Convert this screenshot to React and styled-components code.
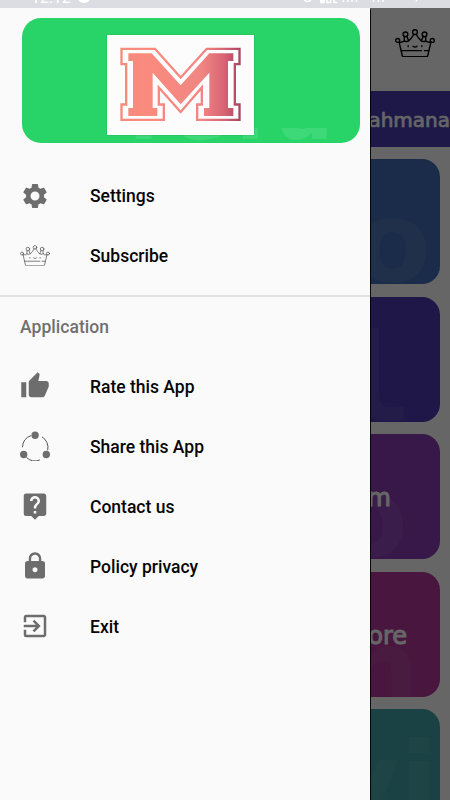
import React from "react";
import styled, { createGlobalStyle } from "styled-components";
import { MdSettings, MdThumbUp, MdLiveHelp, MdLock, MdExitToApp } from "react-icons/md";

const GlobalStyle = createGlobalStyle`
  * { box-sizing: border-box; }
  body { margin: 0; background: #fff; font-family: Roboto, "Liberation Sans", sans-serif; }
`;

const Screen = styled.div`
  position: relative;
  width: 450px;
  height: 800px;
  overflow: hidden;
  display: flex;
  flex-direction: column;
`;

const StatusBar = styled.header`
  height: 8px;
  flex: none;
  display: flex;
  justify-content: space-between;
  align-items: flex-end;
  overflow: hidden;
  background: #dcdde2;
`;

const Page = styled.main`
  flex: 1;
  min-height: 0;
  overflow: hidden;
  background: #fff;
`;

const AppBar = styled.div`
  height: 82.5px;
  padding: 20.5px 15px 0 0;
  display: flex;
  justify-content: flex-end;
  align-items: flex-start;
`;

const Banner = styled.div`
  height: 56px;
  overflow: hidden;
  display: flex;
  align-items: center;
  justify-content: flex-end;
  padding-top: 2px;
  background: #493cb4;
`;

const TechText = styled.span`
  color: #fff;
  font: 400 ${(p) => p.$size}px "DejaVu Sans", sans-serif;
  letter-spacing: ${(p) => p.$spacing || 0}px;
  -webkit-text-stroke: ${(p) => p.$stroke || 0}px #fff;
  white-space: nowrap;
`;

const CardList = styled.div`
  display: flex;
  flex-direction: column;
  gap: 12.5px;
  padding: 12.5px 10px 0 22px;
`;

const Card = styled.section`
  position: relative;
  height: 125px;
  flex: none;
  overflow: hidden;
  border-radius: 18px;
  background: ${(p) => p.$color};
  display: flex;
  align-items: center;
  justify-content: flex-end;
  padding: 3px ${(p) => p.$inset || 0}px 0 0;
`;

const Ghost = styled.span`
  position: absolute;
  right: ${(p) => p.$right}px;
  top: ${(p) => p.$top}px;
  font: 700 ${(p) => p.$size}px/1 ${(p) => (p.$mono ? '"DejaVu Sans Mono", monospace' : '"DejaVu Sans", sans-serif')};
  color: rgba(255, 255, 255, 0.07);
  white-space: nowrap;
`;

const Scrim = styled.div`
  position: absolute;
  inset: 8px 0 0 0;
  background: rgba(0, 0, 0, 0.6);
`;

const Drawer = styled.aside`
  position: absolute;
  left: 0;
  top: 8px;
  bottom: 0;
  width: 370px;
  background: #fafafa;
  box-shadow: 0 0 1px 0.5px rgba(0, 0, 0, 0.9);
  clip-path: inset(0 -8px 0 0);
`;

const Hero = styled.div`
  position: relative;
  margin: 10px 10px 0 22px;
  height: 125px;
  padding: 16.5px 0 0 84.5px;
  border-radius: 19px;
  overflow: hidden;
  background: #28d468;
`;

const LogoTile = styled.div`
  position: relative;
  width: 147.5px;
  height: 100.5px;
  background: #fcfcfc;
  box-shadow: 0 0 1px rgba(0, 70, 20, 0.5);
`;

const HeroGhost = styled.span`
  position: absolute;
  left: 93px;
  top: 50px;
  font: 700 84px/1 "DejaVu Sans", sans-serif;
  letter-spacing: 9px;
  color: rgba(255, 255, 255, 0.1);
  clip-path: inset(60px 0 0 0);
`;

const Menu = styled.nav`
  padding-top: ${(p) => p.$top || 0}px;
`;

const Row = styled.a`
  height: 60px;
  display: flex;
  align-items: center;
  gap: 40px;
  padding-left: 20px;
  font-size: 17.5px;
  font-weight: 500;
  color: #050505;
`;

const Label = styled.span`
  padding-top: 1px;
`;

const IconSlot = styled.span`
  width: 30px;
  height: 30px;
  flex: none;
  display: flex;
  align-items: center;
  justify-content: center;
  color: #6d6d6d;
`;

const SectionTitle = styled.h2`
  margin: 0;
  height: 61px;
  padding: 0 0 0 20px;
  border-top: 2px solid #e1e1e1;
  line-height: 61px;
  font-size: 17.5px;
  font-weight: 500;
  letter-spacing: 0.05px;
  color: #707070;
`;

function Crown({ width, stroke, color = "#000" }) {
  return (
    <svg width={width} height={width * 0.72} viewBox="0 0 40 29" fill="none" stroke={color} strokeWidth={stroke} strokeLinejoin="round" strokeLinecap="round">
      <circle cx="2.6" cy="11.5" r="2" />
      <circle cx="10.4" cy="5.4" r="2.4" />
      <circle cx="20" cy="3.2" r="2.4" />
      <circle cx="29.6" cy="5.4" r="2.4" />
      <circle cx="37.4" cy="11.5" r="2" />
      <path d="M4 13.2 7.2 27q.3 1 1.4 1h22.8q1.1 0 1.4-1L36 13.2M4 13.2q3.5.6 5.2-1.3V7.6M11.8 7.2l1.8 4.8Q17 9 18.8 5.3M21.2 5.3Q23 9 26.4 12l1.8-4.8M30.8 7.6v4.3q1.7 1.9 5.2 1.3M9.2 11.9q2.2 1.4 4.4.1M26.4 12q2.2 1.3 4.4-.1M6 21.8h20.5M29.5 21.8H34M13.1 16.8v.8M26.9 16.8v.8M18 17.4q2 1.5 4 0" />
    </svg>
  );
}

function ShareRing() {
  return (
    <svg width="30" height="30" viewBox="0 0 30 30">
      <path d="M2.5 16.3A12.7 12.7 0 0 1 11 4.6M22 5.8A12.7 12.7 0 0 1 27.7 19.3M6.5 26.500A12.7 12.7 0 0 0 19.8 29" fill="none" stroke="#555" strokeWidth="1" />
      <g fill="#6d6d6d">
        <circle cx="15.1" cy="4.3" r="3.7" />
        <circle cx="3.7" cy="23.5" r="3.7" />
        <circle cx="26.3" cy="23.5" r="3.7" />
      </g>
    </svg>
  );
}

const emblemOuter = "M63.5 55.5H164L241 141.5 319 55.5H417.5V101.5H403.5V222.5H417.5V268.5H290.5V222.5H304.5V171.5L241 245 175.5 171.5V222.5H190.5V268.5H63.5V222.5H77.5V101.5H63.5Z";
const emblemInner = "M84 69H154L241 165 327 69H399V92H383V233H399V257H311V233H327V127L241 222 157 127V233H171V257H84V233H98V92H84Z";

function Emblem() {
  return (
    <svg width="147.5" height="101" viewBox="20 14 442.5 303">
      <defs>
        <linearGradient id="coral" gradientUnits="userSpaceOnUse" x1="61" y1="0" x2="420" y2="0">
          <stop offset="0" stopColor="#f58b7d" />
          <stop offset="0.25" stopColor="#fb8a7e" />
          <stop offset="0.68" stopColor="#f08683" />
          <stop offset="0.86" stopColor="#d96474" />
          <stop offset="1" stopColor="#a84561" />
        </linearGradient>
      </defs>
      <path d={emblemOuter} fill="none" stroke="url(#coral)" strokeWidth="7" />
      <path d={emblemInner} fill="url(#coral)" />
    </svg>
  );
}

const StatusText = styled.span`
  font-size: 16px;
  line-height: 16px;
  margin-bottom: 2px;
  color: #fff;
`;

const StatusGroup = styled.div`
  display: flex;
  align-items: flex-end;
  gap: 6px;
  height: 16px;
  padding-left: ${(p) => p.$left || 0}px;
`;

function StatusGlyphs() {
  return (
    <svg width="150" height="8" viewBox="300 0 150 8" fill="none" stroke="#fff">
      <path d="M304 0Q307.5 3 311 0" strokeWidth="1.5" />
      <path d="M321 0v2.5h3V0M327 0v2.5h3.5V0M334 0v2.5h3M320 1h4M343.5 0v2M348 0v2M352 0v2M356.5 0v2M373.5 0v2M378.5 0v2M383 0v2M416.5 0v1.5" strokeWidth="1.5" />
    </svg>
  );
}

const StatusDot = styled.i`
  width: 14px;
  height: 14px;
  margin-bottom: 5px;
  border-radius: 50%;
  background: #fff;
`;

const accountItems = [
  ["Settings", <MdSettings size={30} />],
  ["Subscribe", <Crown width={30} stroke={1} color="#555" />],
];

const appItems = [
  ["Rate this App", <MdThumbUp size={30} />],
  ["Share this App", <ShareRing />],
  ["Contact us", <MdLiveHelp size={30} />],
  ["Policy privacy", <MdLock size={30} />],
  ["Exit", <MdExitToApp size={30} />],
];

const renderRow = ([label, icon]) => (
  <Row key={label}>
    <IconSlot>{icon}</IconSlot>
    <Label>{label}</Label>
  </Row>
);

export default function App() {
  return (
    <>
      <GlobalStyle />
      <Screen>
        <StatusBar>
          <StatusGroup $left={31}>
            <StatusText>12:12</StatusText>
            <StatusDot />
          </StatusGroup>
          <StatusGlyphs />
        </StatusBar>
        <Page>
          <AppBar>
            <Crown width={40} stroke={1.4} />
          </AppBar>
          <Banner>
            <TechText $size={20} $spacing={0} $stroke={0.7}>ahmana</TechText>
          </Banner>
          <CardList>
            <Card $color="#436eb6"><Ghost $size={112} $right={9} $top={27}>o</Ghost></Card>
            <Card $color="#4b3ab2"><Ghost $mono $size={122} $right={28} $top={20}>l</Ghost></Card>
            <Card $color="#8a3cb4" $inset={49}>
              <Ghost $size={112} $right={32} $top={27}>o</Ghost>
              <TechText $size={24} $stroke={1}>m</TechText>
            </Card>
            <Card $color="#b4379e" $inset={33}>
              <Ghost $size={112} $right={20} $top={42}>n</Ghost>
              <TechText $size={24} $stroke={1}>ore</TechText>
            </Card>
            <Card $color="#41a5aa"><Ghost $size={112} $right={2} $top={18}>vi</Ghost></Card>
          </CardList>
        </Page>
        <Scrim />
        <Drawer>
          <Hero>
            <HeroGhost>Telu</HeroGhost>
            <LogoTile><Emblem /></LogoTile>
          </Hero>
          <Menu $top={22.5}>{accountItems.map(renderRow)}</Menu>
          <Menu $top={9.5}>
            <SectionTitle>Application</SectionTitle>
            {appItems.map(renderRow)}
          </Menu>
        </Drawer>
      </Screen>
    </>
  );
}
